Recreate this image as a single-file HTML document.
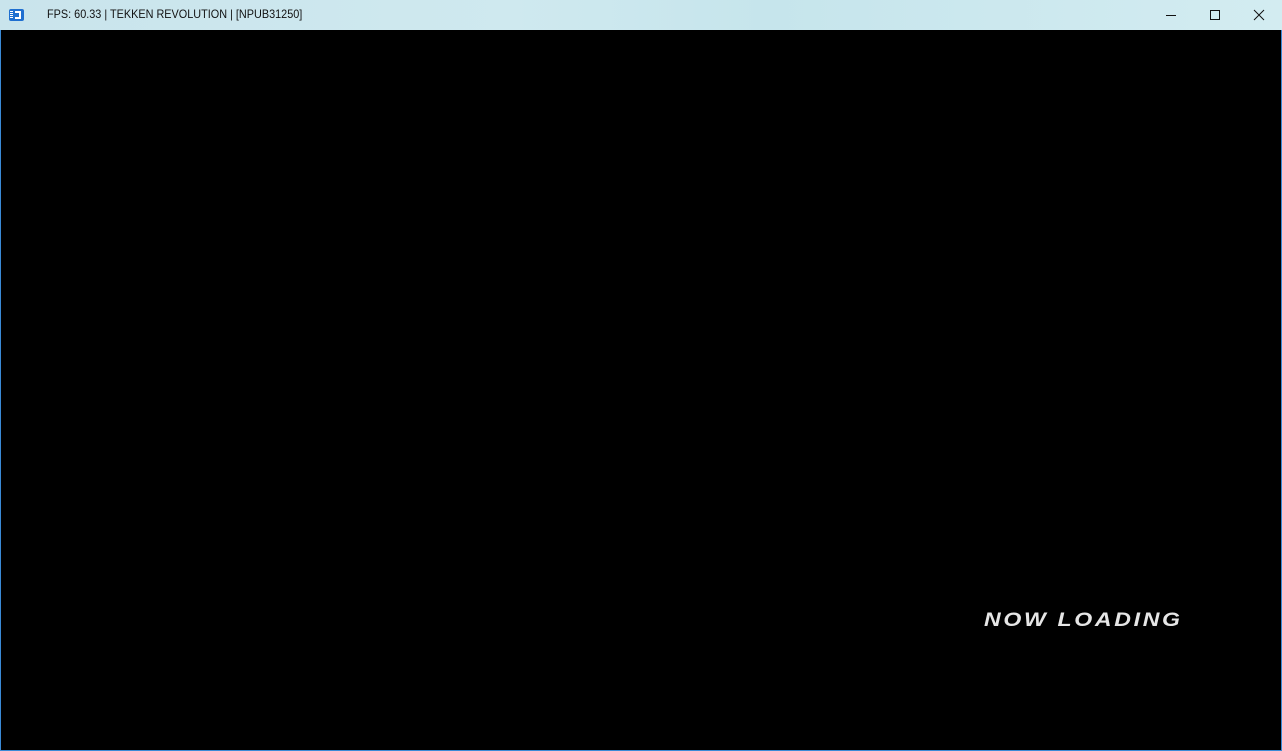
<!DOCTYPE html>
<html><head><style>
html,body{margin:0;padding:0;width:1282px;height:751px;overflow:hidden;background:#2b7fd0;}
#win{position:absolute;left:0;top:0;width:1282px;height:751px;box-sizing:border-box;border:1px solid #3a8ad6;border-top:none;background:#000;}
#tb{position:absolute;left:0;top:0;width:1282px;height:30px;background:linear-gradient(90deg,#c9e4ec 0%,#cfe9ef 40%,#c6e5ec 60%,#d3ecf1 100%);}
#ic{position:absolute;left:9px;top:9px;width:15px;height:12px;background:#1f6fd0;border-radius:2px;}
#ic:after{content:"";position:absolute;left:6px;top:2px;width:6px;height:8px;border:2px solid #fff;border-left:none;box-sizing:border-box;}
#ic:before{content:"";position:absolute;left:1px;top:2px;width:3px;height:8px;background:repeating-linear-gradient(#fff 0 1px,transparent 1px 2px);}
#t{position:absolute;left:47px;top:7px;font:12px "Liberation Sans",sans-serif;color:#111;transform:scaleX(0.905);transform-origin:left;white-space:nowrap;}
.b{position:absolute;top:0;height:30px;}
#nl{position:absolute;left:984px;top:610px;font:italic bold 19px "Liberation Sans",sans-serif;color:#e6e6e6;letter-spacing:2.2px;transform:scaleX(1.215);transform-origin:left;white-space:nowrap;}
</style></head><body>
<div id="win"></div>
<div id="tb">
<div id="ic"></div>
<div id="t">FPS: 60.33 | TEKKEN REVOLUTION | [NPUB31250]</div>
<svg class="b" style="left:1160px" width="110" height="30">
<line x1="6" y1="15.5" x2="16" y2="15.5" stroke="#111" stroke-width="1"/>
<rect x="50.5" y="10.5" width="9" height="9" fill="none" stroke="#111" stroke-width="1"/>
<path d="M94 10 L104 20 M104 10 L94 20" stroke="#111" stroke-width="1"/>
</svg>
</div>
<div id="nl">NOW LOADING</div>
</body></html>
